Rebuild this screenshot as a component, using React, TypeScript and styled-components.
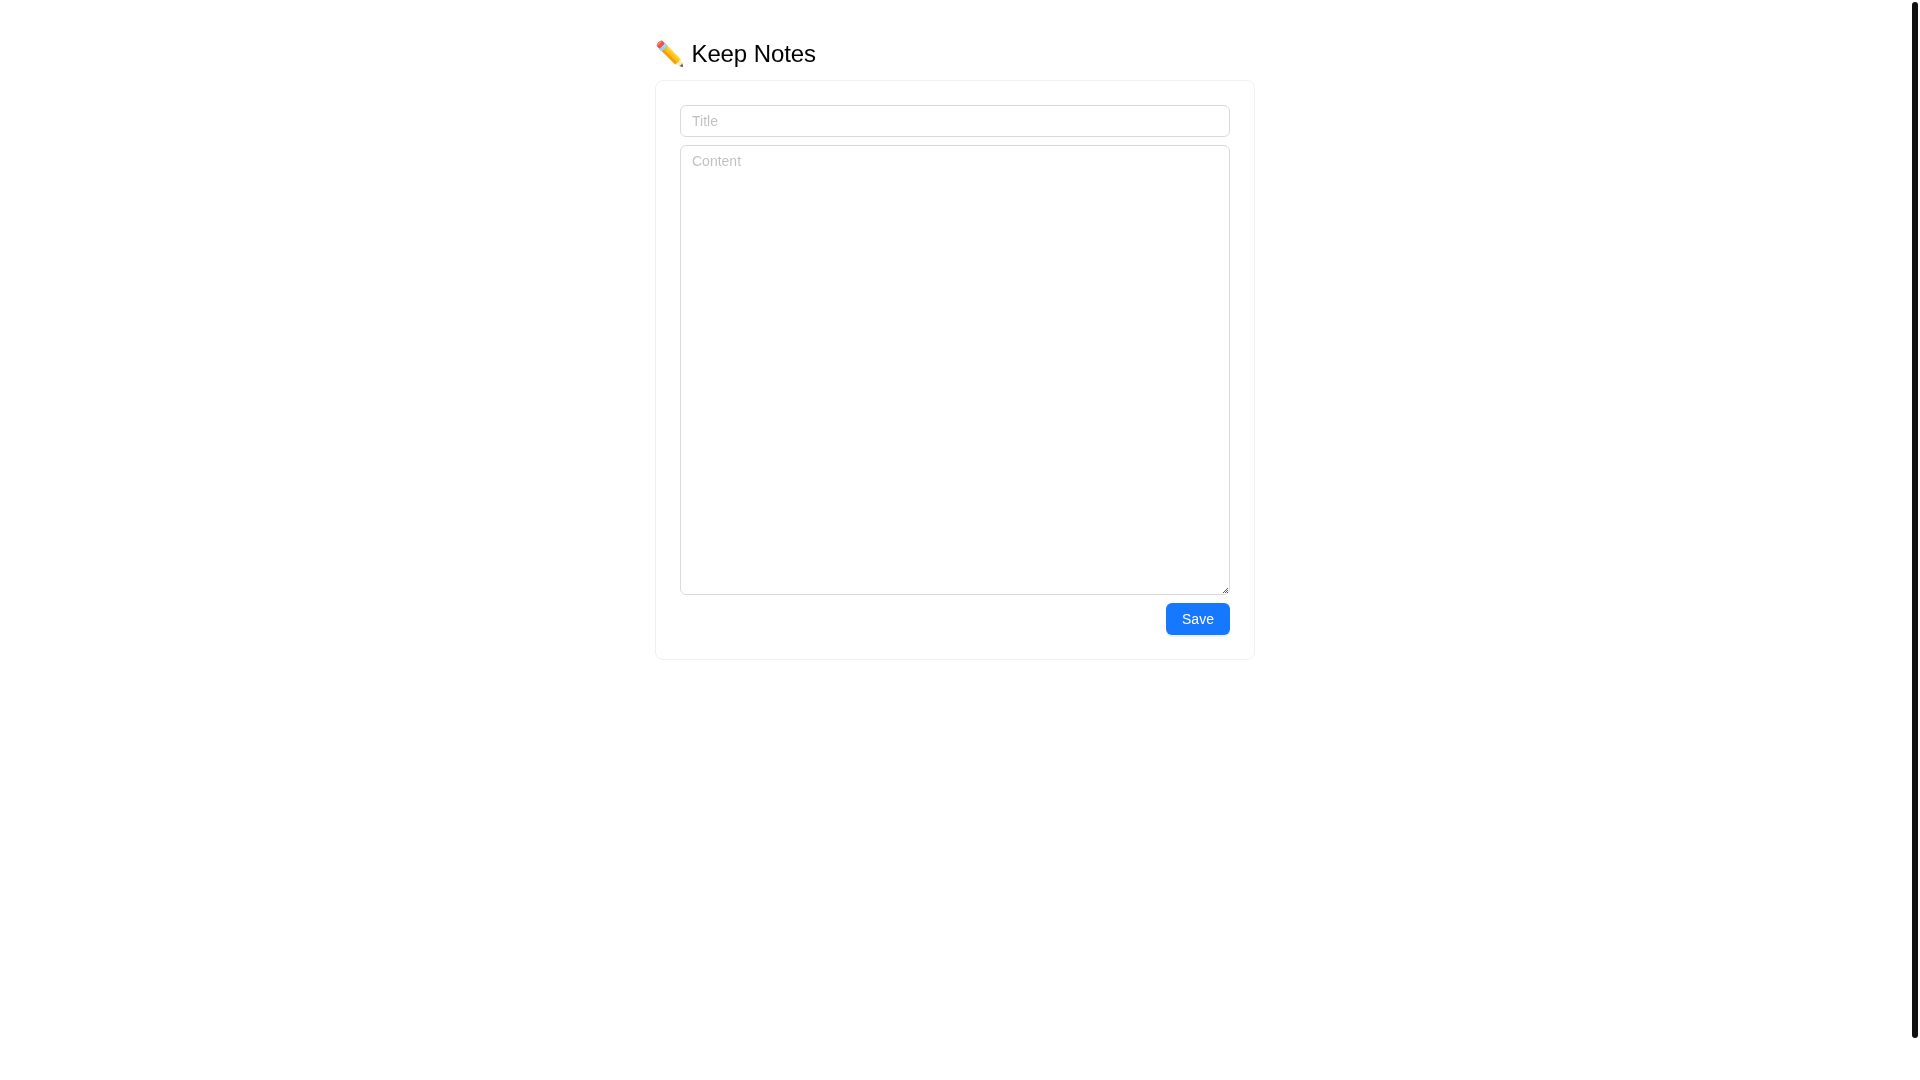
import React from "react";
import styled, { createGlobalStyle } from "styled-components";

const Global = createGlobalStyle`
  html { background: #fff; }
  body {
    margin: 0;
    background: #fff;
    font-family: "Liberation Sans", Arial, sans-serif;
    color: rgba(0, 0, 0, 0.88);
  }
`;

const Viewport = styled.div`
  box-sizing: border-box;
  min-height: 100vh;
  padding: 38px 10px 0 0;
  will-change: transform;
`;

const Page = styled.main`
  width: 600px;
  margin: 0 auto;
`;

const ScrollThumb = styled.div`
  position: fixed;
  top: 2px;
  right: 2px;
  width: 6px;
  height: 1036px;
  background: #111;
  border-radius: 3px;
`;

const Heading = styled.h1`
  margin: 0 0 10px;
  font-size: 24px;
  line-height: 32px;
  font-weight: 400;
  letter-spacing: -0.1px;
  color: #000;
`;

const Card = styled.form`
  box-sizing: border-box;
  display: flex;
  flex-direction: column;
  gap: 8px;
  padding: 24px;
  border: 1px solid #f0f0f0;
  border-radius: 8px;
`;

const fieldStyles = `
  box-sizing: border-box;
  display: block;
  width: 100%;
  padding: 4px 11px;
  font-family: "Liberation Sans", Arial, sans-serif;
  font-size: 14px;
  line-height: 22px;
  color: rgba(0, 0, 0, 0.88);
  background: transparent;
  border: 1px solid #d9d9d9;
  border-radius: 6px;
  outline: none;
  &::placeholder { color: rgba(0, 0, 0, 0.25); }
`;

const TitleInput = styled.input`
  ${fieldStyles}
  height: 32px;
`;

const gripSvg =
  "data:image/svg+xml," +
  encodeURIComponent(
    '<svg xmlns="http://www.w3.org/2000/svg" width="5" height="5" shape-rendering="crispEdges" fill="#555">' +
      '<rect x="4" y="0" width="1" height="1"/><rect x="3" y="1" width="1" height="1"/>' +
      '<rect x="2" y="2" width="1" height="1"/><rect x="4" y="2" width="1" height="1"/>' +
      '<rect x="1" y="3" width="1" height="1"/><rect x="3" y="3" width="1" height="1"/>' +
      '<rect x="0" y="4" width="1" height="1"/><rect x="2" y="4" width="1" height="1"/><rect x="4" y="4" width="1" height="1"/>' +
      "</svg>"
  );

const ContentArea = styled.textarea`
  ${fieldStyles}
  height: 450px;
  resize: vertical;
  &::-webkit-resizer {
    background: url("${gripSvg}") no-repeat right 1px bottom 1px;
  }
`;

const Actions = styled.div`
  display: flex;
  justify-content: flex-end;
`;

const SaveButton = styled.button`
  box-sizing: border-box;
  width: 64px;
  height: 32px;
  padding: 0;
  font-family: "Liberation Sans", Arial, sans-serif;
  font-size: 14px;
  color: #fff;
  background: #1677ff;
  border: 1px solid transparent;
  border-radius: 6px;
  box-shadow: 0 2px 0 rgba(5, 145, 255, 0.1);
  cursor: pointer;
`;

export default function App() {
  return (
    <>
      <Global />
      <Viewport>
        <Page>
          <Heading>✏️ Keep Notes</Heading>
          <Card onSubmit={(e) => e.preventDefault()}>
            <TitleInput placeholder="Title" />
            <ContentArea placeholder="Content" />
            <Actions>
              <SaveButton type="submit">Save</SaveButton>
            </Actions>
          </Card>
        </Page>
      </Viewport>
      <ScrollThumb />
    </>
  );
}
